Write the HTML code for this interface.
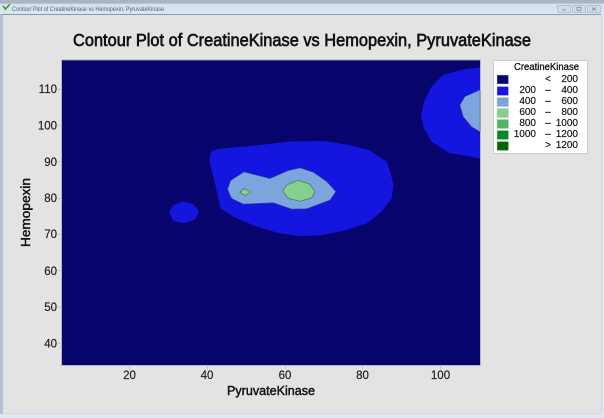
<!DOCTYPE html>
<html><head><meta charset="utf-8"><style>
html,body{margin:0;padding:0;width:604px;height:418px;overflow:hidden;background:#e3e3e3}
svg{display:block}
text{font-family:"Liberation Sans",sans-serif;fill:#1a1a1a}
</style></head><body>
<svg width="604" height="418" viewBox="0 0 604 418" xmlns="http://www.w3.org/2000/svg">
<defs><linearGradient id="tb" x1="0" y1="0" x2="0" y2="1"><stop offset="0" stop-color="#aab4c2"/><stop offset=".22" stop-color="#aab4c2"/><stop offset=".3" stop-color="#d5e0ee"/><stop offset="1" stop-color="#dbe6f2"/></linearGradient></defs>
<rect width="604" height="418" fill="#dde8f4"/>
<rect width="604" height="14" fill="url(#tb)"/>
<rect x="3" y="14" width="598" height="400" fill="#e3e3e3"/>
<rect x="0" y="14" width="3" height="400" fill="#b4c0d2"/>
<rect x="2" y="14" width="599" height="1" fill="#8f99a5"/>
<rect x="601" y="14" width="1" height="400" fill="#d0d4d9"/>
<rect x="3" y="413" width="599" height="1" fill="#d6d8da"/>
<path d="M3 6l2.500 3L10 4" fill="none" stroke="#3f9a3a" stroke-width="1.600"/>
<text x="12" y="11" font-size="6.300" textLength="152" lengthAdjust="spacingAndGlyphs" style="fill:#56626e">Contour Plot of CreatineKinase vs Hemopexin, PyruvateKinase</text>
<g fill="#d0dbe9" stroke="#a8b6c6" stroke-width=".7">
<rect x="557.500" y="5.500" width="13" height="7" rx="1"/><rect x="572.500" y="5.500" width="13" height="7" rx="1"/><rect x="587.500" y="5.500" width="13" height="7" rx="1"/>
</g>
<g fill="none" stroke="#7f8c9b" stroke-width=".8"><path d="M562 10h4"/><rect x="577" y="7.500" width="4" height="3"/><path d="M592 7.500l4 3m0-3l-4 3"/></g>

<text x="73" y="46" font-size="17.500" textLength="458" lengthAdjust="spacingAndGlyphs" style="fill:#111;stroke:#111;stroke-width:.65">Contour Plot of CreatineKinase vs Hemopexin, PyruvateKinase</text>

<rect x="62" y="60" width="418" height="305" fill="#08046e"/>
<rect x="61.500" y="60" width="419" height="305.500" fill="none" stroke="#a9a9bc" stroke-width=".8"/>
<g transform="translate(160 130) scale(.33333)">
<path fill="#1515e0" d="M150 75L158 62L175 57L300 45L390 35L490 33L570 45L630 62L680 95L692 130L700 165L695 205L665 245L620 280L560 300L480 316L420 318L360 310L290 290L220 260L182 235L165 160L148 90Z"/>
<path fill="#1515e0" d="M68 214L100 222L117 245L105 268L70 280L40 272L27 247L40 225Z"/>
<path fill="#7ba5dc" stroke="#4a5f7a" stroke-width="1.500" d="M252 126L330 146L385 122L420 114L460 127L500 155L527 185L510 210L440 236L395 237L340 218L250 222L215 205L203 178L212 152Z"/>
<path fill="#84d08e" stroke="#4a6a5a" stroke-width="2" d="M415 151L450 163L465 185L455 203L420 214L385 205L368 183L380 165Z"/>
<path fill="#84d08e" stroke="#4a6a5a" stroke-width="2" d="M252 175L273 186L255 197L240 187Z"/>
</g>
<g transform="translate(400 55) scale(.33333)">
<path fill="#1515e0" d="M240 37L190 43L130 60L95 95L72 140L63 183L72 220L95 260L145 293L240 310Z"/>
<path fill="#7ba5dc" stroke="#4a5f7a" stroke-width="1.500" d="M240 105L195 125L180 150L190 185L215 215L240 230Z"/>
</g>

<g stroke="#c4c4c4" stroke-width="1">
<path d="M58 89.500h4M58 125.500h4M58 161.500h4M58 198.500h4M58 234.500h4M58 270.500h4M58 307.500h4M58 343.500h4"/>
<path d="M129.500 365v4M207.500 365v4M285.500 365v4M362.500 365v4M440.500 365v4"/>
</g>
<g font-size="11.500" text-anchor="end" style="stroke:#1a1a1a;stroke-width:.15">
<text x="57" y="93">110</text><text x="57" y="129.500">100</text><text x="57" y="166">90</text><text x="57" y="202">80</text><text x="57" y="238">70</text><text x="57" y="275">60</text><text x="57" y="311">50</text><text x="57" y="347.500">40</text>
</g>
<g font-size="11.500" text-anchor="middle" style="stroke:#1a1a1a;stroke-width:.15">
<text x="129.500" y="379">20</text><text x="207" y="379">40</text><text x="285" y="379">60</text><text x="362.500" y="379">80</text><text x="440.500" y="379">100</text>
</g>
<text x="227" y="395" font-size="13" textLength="88" lengthAdjust="spacingAndGlyphs" style="fill:#111;stroke:#111;stroke-width:.45">PyruvateKinase</text>
<text transform="translate(30 247) rotate(-90)" font-size="13" textLength="69" lengthAdjust="spacingAndGlyphs" style="fill:#111;stroke:#111;stroke-width:.45">Hemopexin</text>

<rect x="493.500" y="60.500" width="94" height="93" fill="#fff" stroke="#cfcfcf"/>
<text x="514" y="70" font-size="10" textLength="65" lengthAdjust="spacingAndGlyphs" style="fill:#111;stroke:#111;stroke-width:.3">CreatineKinase</text>
<g stroke="#c9c9c9" stroke-width=".5">
<rect x="497" y="75" width="11.500" height="9" fill="#08046e"/>
<rect x="497" y="86.500" width="11.500" height="9" fill="#1515e0"/>
<rect x="497" y="97.500" width="11.500" height="9" fill="#7ba5dc"/>
<rect x="497" y="108.500" width="11.500" height="9" fill="#84d08e"/>
<rect x="497" y="119.500" width="11.500" height="9" fill="#52b45c"/>
<rect x="497" y="130.500" width="11.500" height="9" fill="#008a28"/>
<rect x="497" y="141.500" width="11.500" height="9" fill="#006a00"/>
</g>
<g font-size="10" text-anchor="end" style="stroke:#1a1a1a;stroke-width:.2">
<text x="578" y="82">200</text><text x="578" y="93">400</text><text x="578" y="104">600</text><text x="578" y="115">800</text><text x="578" y="126">1000</text><text x="578" y="137">1200</text><text x="578" y="148">1200</text>
<text x="536" y="93">200</text><text x="536" y="104">400</text><text x="536" y="115">600</text><text x="536" y="126">800</text><text x="536" y="137">1000</text>
</g>
<g font-size="10" text-anchor="middle" style="stroke:#1a1a1a;stroke-width:.2">
<text x="548" y="82">&lt;</text><text x="548" y="93">–</text><text x="548" y="104">–</text><text x="548" y="115">–</text><text x="548" y="126">–</text><text x="548" y="137">–</text><text x="548" y="148">&gt;</text>
</g>
</svg>
</body></html>
